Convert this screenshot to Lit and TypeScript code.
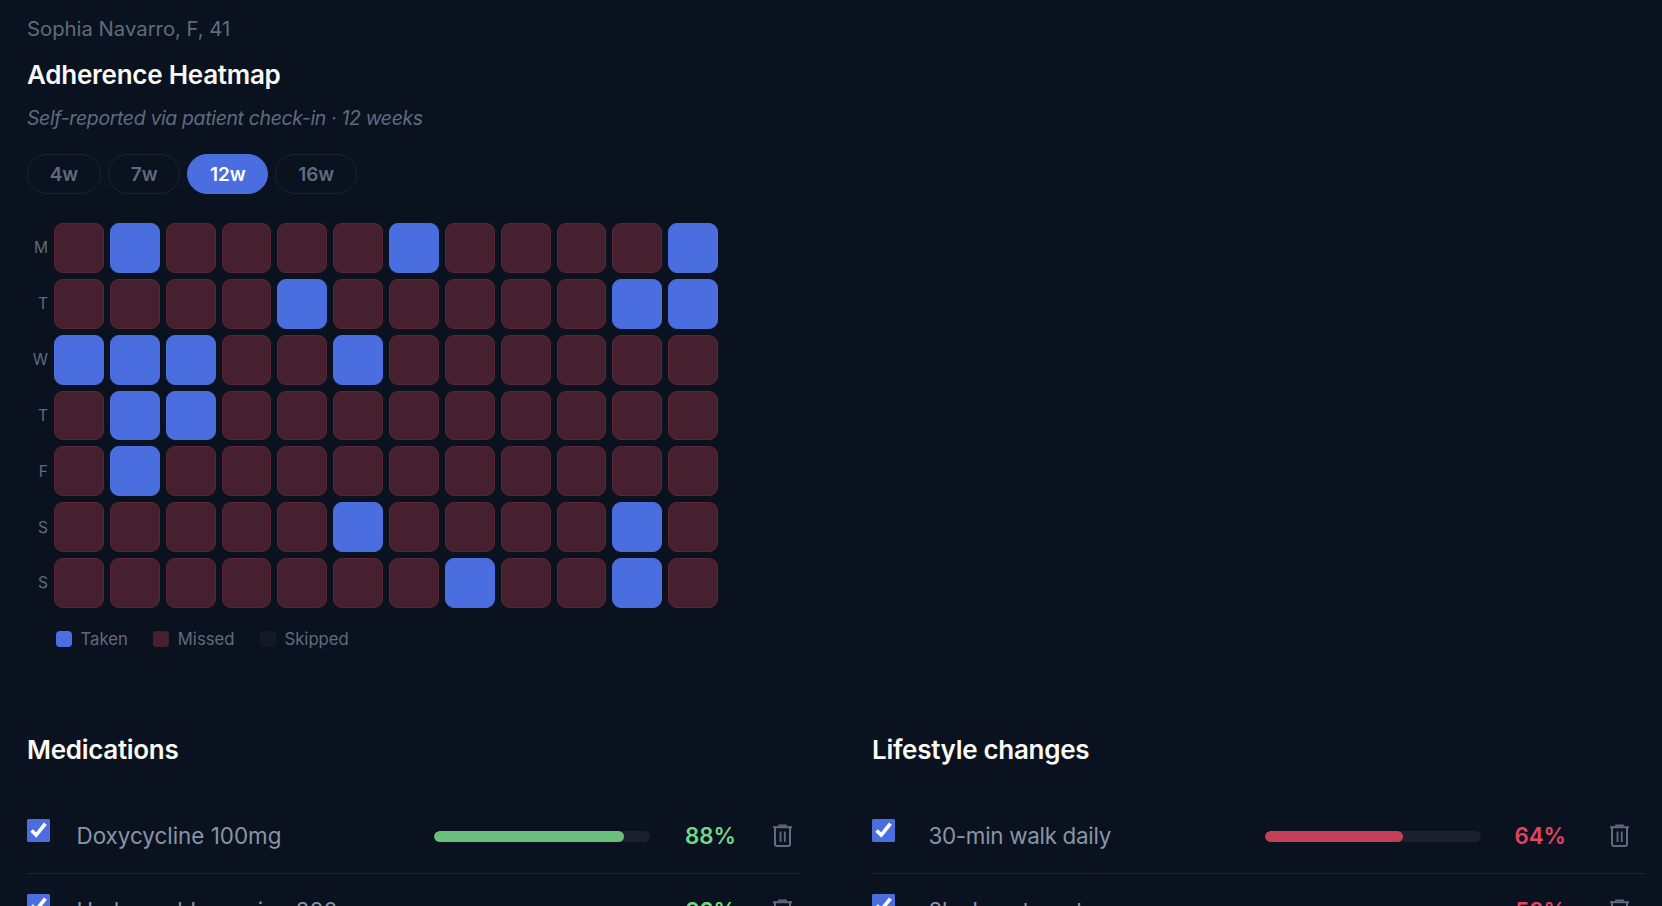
import { LitElement, html, css } from "lit";
import { customElement } from "lit/decorators.js";

const taken: Record<number, number[]> = {
  0: [1, 6, 11],
  1: [4, 10, 11],
  2: [0, 1, 2, 5],
  3: [1, 2],
  4: [1],
  5: [5, 10],
  6: [7, 10],
};
const days = ["M", "T", "W", "T", "F", "S", "S"];

const trash = html`<svg class="trash" viewBox="0 0 19 23" fill="none" stroke="currentColor" stroke-width="2">
  <path d="M6 2.5V1.2h7v1.3" stroke-width="1.6" />
  <path d="M0 3.2h19" />
  <path d="M2 3.2v17a1.8 1.8 0 0 0 1.8 1.8h11.4a1.8 1.8 0 0 0 1.8-1.8v-17" />
  <path d="M7.5 7.5v10.5M11.8 7.5v10.5" stroke-width="1.8" />
</svg>`;

const meds = [
  { name: "Doxycycline 100mg", pct: 88, color: "#6abf7b", text: "#72d886" },
  { name: "Hydroxychloroquine 200mg", pct: 92, color: "#6abf7b", text: "#72d886" },
];
const life = [
  { name: "30-min walk daily", pct: 64, color: "#c44059", text: "#e5435f" },
  { name: "8h sleep target", pct: 58, color: "#c44059", text: "#e5435f" },
];

@customElement("app-root")
export class AppRoot extends LitElement {
  static styles = css`
    :host {
      display: block;
      height: 906px;
      overflow: hidden;
      background: #0a121f;
      font-family: "Inter", "Noto Sans", sans-serif;
      color: #fff;
    }
    .page {
      padding: 17px 17px 0 27px;
    }
    .patient {
      font-size: 20.3px;
      line-height: 24px;
      color: #5f6b7e;
    }
    h1 {
      margin: 19px 0 0;
      font-size: 26px;
      line-height: 30px;
      font-weight: 600;
      letter-spacing: -0.25px;
      color: #fbfaf5;
    }
    .sub {
      margin-top: 16px;
      font-size: 19.4px;
      line-height: 24px;
      font-style: italic;
      color: #5f6b7e;
      letter-spacing: -0.32px;
    }
    .tabs {
      display: flex;
      gap: 7px;
      margin-top: 24px;
    }
    .tab {
      height: 40px;
      box-sizing: border-box;
      border: 1px solid #1c2430;
      border-radius: 20px;
      padding: 0 21.8px;
      display: flex;
      align-items: center;
      font-size: 19px;
      font-weight: 600;
      letter-spacing: -0.1px;
      color: #5f6b7e;
    }
    .tab.on {
      background: #4a6ee0;
      border-color: #4a6ee0;
      color: #fff;
    }
    .heat {
      margin-top: 29px;
      width: 691px;
      display: grid;
      grid-template-columns: 21px repeat(12, 1fr);
      gap: 6px;
    }
    .day {
      font-size: 15.5px;
      color: #5f6b7e;
      text-align: right;
      align-self: center;
    }
    .cell {
      aspect-ratio: 1;
      box-sizing: border-box;
      border-radius: 9px;
      background: #46202e;
      border: 1px solid #5c2635;
    }
    .cell.t {
      background: #4a6ee0;
      border-color: #4a6ee0;
    }
    .legend {
      display: flex;
      margin: 21px 0 0 29px;
      align-items: center;
      font-size: 16.7px;
      line-height: 20px;
      color: #5f6b7e;
      gap: 25.5px;
    }
    .lg {
      display: flex;
      align-items: center;
      gap: 8.5px;
    }
    .sw {
      width: 16px;
      height: 16px;
      border-radius: 4px;
    }
    .cols {
      display: grid;
      grid-template-columns: 1fr 1fr;
      gap: 72px;
      margin-top: 85px;
    }
    h2 {
      margin: 0 0 33px;
      font-size: 26px;
      line-height: 32px;
      font-weight: 600;
      letter-spacing: -0.3px;
      color: #fbfaf5;
    }
    .row {
      display: flex;
      align-items: center;
      height: 74px;
      border-bottom: 1px solid #1c2430;
    }
    input {
      margin: 0 0 11px 0;
      width: 23px;
      height: 23px;
      accent-color: #4a6ee0;
      flex: none;
    }
    .name {
      flex: 1;
      margin-left: 26.5px;
      font-size: 22.4px;
      color: #8894a8;
      white-space: nowrap;
    }
    .bar {
      width: 216px;
      height: 11px;
      margin-top: 1px;
      border-radius: 6px;
      background: #1a212d;
      flex: none;
      overflow: hidden;
    }
    .fill {
      height: 100%;
      border-radius: 6px;
    }
    .pct {
      width: 86px;
      text-align: right;
      font-size: 22.3px;
      font-weight: 600;
      flex: none;
      white-space: nowrap;
    }
    .trash {
      width: 19px;
      height: 23px;
      color: #5f6b7e;
      flex: none;
      margin: 0 8px 0 37px;
    }
    .life .name {
      margin-left: 33.5px;
      letter-spacing: -0.3px;
    }
    .life .pct {
      width: 85px;
    }
    .life .trash {
      margin: 0 16px 0 44px;
    }
  `;

  private renderRow(r: { name: string; pct: number; color: string; text: string }) {
    return html`<div class="row">
      <input type="checkbox" checked />
      <span class="name">${r.name}</span>
      <div class="bar"><div class="fill" style="width:${r.pct}%;background:${r.color}"></div></div>
      <span class="pct" style="color:${r.text}">${r.pct}%</span>
      ${trash}
    </div>`;
  }

  render() {
    return html`<div class="page">
      <div class="patient">Sophia Navarro, F, 41</div>
      <h1>Adherence Heatmap</h1>
      <div class="sub">Self-reported via patient check-in · 12 weeks</div>
      <div class="tabs">
        ${["4w", "7w", "12w", "16w"].map((t) => html`<div class="tab ${t === "12w" ? "on" : ""}">${t}</div>`)}
      </div>
      <div class="heat">
        ${days.map(
          (d, i) => html`<div class="day">${d}</div>
            ${Array.from({ length: 12 }, (_, c) => html`<div class="cell ${taken[i].includes(c) ? "t" : ""}"></div>`)}`
        )}
      </div>
      <div class="legend">
        <div class="lg"><span class="sw" style="background:#4a6ee0"></span>Taken</div>
        <div class="lg"><span class="sw" style="background:#46202e"></span>Missed</div>
        <div class="lg"><span class="sw" style="background:#131a26"></span>Skipped</div>
      </div>
      <div class="cols">
        <div class="med"><h2>Medications</h2>${meds.map((m) => this.renderRow(m))}</div>
        <div class="life"><h2>Lifestyle changes</h2>${life.map((m) => this.renderRow(m))}</div>
      </div>
    </div>`;
  }
}
